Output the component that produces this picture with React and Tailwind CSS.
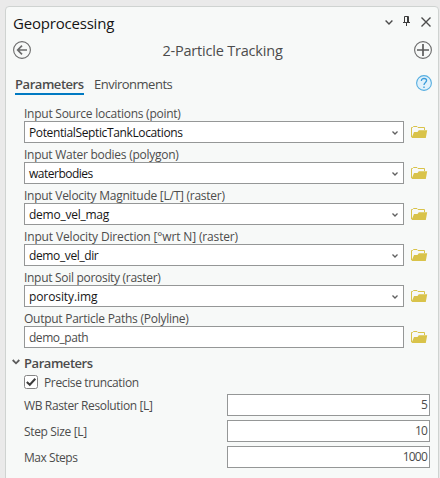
const fields = [
  { label: 'Input Source locations (point)', value: 'PotentialSepticTankLocations', lt: 'tracking-[-0.25px]', vt: 'tracking-[-0.37px]' },
  { label: 'Input Water bodies (polygon)', value: 'waterbodies', lt: 'tracking-[-0.26px]', vt: 'tracking-[-0.5px]' },
  { label: 'Input Velocity Magnitude [L/T] (raster)', value: 'demo_vel_mag', lt: 'tracking-[-0.26px]', vt: 'tracking-[-0.25px]' },
  { label: 'Input Velocity Direction [°wrt N] (raster)', value: 'demo_vel_dir', lt: 'tracking-[-0.15px]', vt: 'tracking-[-0.38px]' },
  { label: 'Input Soil porosity (raster)', value: 'porosity.img', lt: 'tracking-[-0.3px]', vt: 'tracking-[-0.1px]' },
  { label: 'Output Particle Paths (Polyline)', value: 'demo_path', lt: 'tracking-[-0.26px]', vt: 'tracking-[-0.47px]', output: true },
];

const numbers = [
  { label: 'WB Raster Resolution [L]', value: '5', lt: 'tracking-[-0.37px]' },
  { label: 'Step Size [L]', value: '10', lt: 'tracking-[-0.35px]' },
  { label: 'Max Steps', value: '1000', lt: 'tracking-[-0.45px]' },
];

function Folder() {
  return (
    <svg className="ml-[7px] h-[14px] w-[17px] shrink-0" viewBox="0 0 17 14" fill="none">
      <path d="M.5 12V2.5H1.5L2.5 1.5H6L7 2.5H13.5V5" stroke="#d9c34a" />
      <path d="M3 6.9H6.5L7.8 5.2H16.2L14.8 13H.5Z" fill="#d9c34a" />
    </svg>
  );
}

function Field({ field }) {
  return (
    <div className="h-[41px]">
      <div className={`h-[17px] whitespace-nowrap leading-[22px] ${field.lt}`}>{field.label}</div>
      <div className="mt-px flex items-center">
        <div className="flex h-[22px] w-[380px] items-center justify-between border border-[#959797] bg-white pr-[5px] pl-[4px]">
          <span className={`whitespace-nowrap pt-px leading-[21px] ${field.vt} ${field.output ? 'text-[#4c4c4c]' : 'text-[#151515]'}`}>{field.value}</span>
          {!field.output && (
            <svg className="mt-[2px] h-[4px] w-[6px]" viewBox="0 0 6 4" fill="none">
              <path d="M.5 .5L3 3L5.5 .5" stroke="#606060" strokeWidth="1.3" />
            </svg>
          )}
        </div>
        <Folder />
      </div>
    </div>
  );
}

export default function App() {
  return (
    <div className="h-[478px] w-[440px] overflow-hidden bg-[#eaeaea] pt-[6px] pl-[5px] font-['Open_Sans','Noto_Sans',sans-serif] text-[12px] text-[#4c4c4c]">
      <div className="h-[480px] w-[434px] rounded-t-[4px] border border-[#cfd3d1] bg-[#f7f9f8]">
        <header className="flex h-[32px] items-center justify-between pr-[7px] pl-[7px]">
          <h1 className="text-[15px] leading-[32px] tracking-[-0.2px] text-[#151515]">Geoprocessing</h1>
          <div className="flex items-center">
            <svg className="mt-[-1px] h-[5px] w-[8px]" viewBox="0 0 8 5" fill="none">
              <path d="M.6 .6L4 4L7.4 .6" stroke="#4c4c4c" strokeWidth="1.4" />
            </svg>
            <svg className="ml-[10px] mt-[-4px] h-[10px] w-[7px]" viewBox="0 0 7 10" fill="none">
              <path d="M1.5 6V.5H5.5V6M0 6.5H7M3.5 6V10" stroke="#3c3c3c" />
              <path d="M4.5 .5V6" stroke="#3c3c3c" />
            </svg>
            <svg className="ml-[11px] mt-[-2px] h-[10px] w-[10px]" viewBox="0 0 10 10" fill="none">
              <path d="M.5 .5L9.5 9.5M9.5 .5L.5 9.5" stroke="#4c4c4c" strokeWidth="1.4" />
            </svg>
          </div>
        </header>
        <div className="flex h-[24px] items-center justify-between pr-[6px] pl-[7px]">
          <svg className="mt-[-2px] h-[18px] w-[18px]" viewBox="0 0 18 18" fill="none">
            <circle cx="9" cy="9" r="8.4" stroke="#6b6b6b" strokeWidth="1.1" />
            <path d="M14 9H5M9 4.7L4.7 9L9 13.3" stroke="#6b6b6b" strokeWidth="1.7" />
          </svg>
          <h2 className="text-[14.5px] leading-[24px] tracking-[-0.2px]">2-Particle Tracking</h2>
          <svg className="mt-[-2px] h-[18px] w-[18px]" viewBox="0 0 18 18" fill="none">
            <circle cx="9" cy="9" r="8.4" stroke="#6b6b6b" strokeWidth="1.1" />
            <path d="M3 9H15M9 3V15" stroke="#5c5c5c" strokeWidth="1.7" />
          </svg>
        </div>
        <nav className="mt-[11px] flex h-[21px] pr-[6px] pl-[9px] text-[13px] leading-[20px]">
          <div className="h-[21px] w-[69px] border-b-2 border-[#007ac2] font-semibold tracking-[-0.45px]">Parameters</div>
          <div className="ml-[10px] tracking-[-0.5px]">Environments</div>
          <svg className="mt-px ml-auto h-[16px] w-[16px]" viewBox="0 0 16 16" fill="none">
            <circle cx="8" cy="8" r="7.4" fill="#e0f1fb" stroke="#56aee0" strokeWidth="1.1" />
            <path d="M5.4 6V5.6C5.4 2.8 10.6 2.8 10.6 5.6C10.6 7.4 8 7.6 8 10" stroke="#3b9ddb" strokeWidth="1.3" />
            <path d="M7.3 11.4H8.7V13H7.3Z" fill="#3b9ddb" />
          </svg>
        </nav>
        <main className="mt-[8px] pl-[18px]">
          {fields.map((f) => <Field key={f.label} field={f} />)}
          <div className="mt-[3px] ml-[-12px] flex h-[22px] items-center text-[13px] leading-[22px]">
            <svg className="mt-[-2px] h-[6px] w-[8px]" viewBox="0 0 8 6" fill="none">
              <path d="M.7 1L4 4.3L7.3 1" stroke="#5c5c5c" strokeWidth="1.8" />
            </svg>
            <h3 className="ml-[4px] font-semibold tracking-[-0.45px]">Parameters</h3>
          </div>
          <div className="mt-[-1px] flex h-[18px] items-center">
            <svg className="h-[14px] w-[14px]" viewBox="0 0 14 14" fill="none">
              <rect x=".5" y=".5" width="13" height="13" rx="2" fill="white" stroke="#858585" />
              <path d="M2.8 7L5.8 9.8L11.3 3.8" stroke="#3c3c3c" strokeWidth="2" />
            </svg>
            <span className="ml-[6px] pt-[2px] leading-[18px] tracking-[-0.37px]">Precise truncation</span>
          </div>
          <div className="mt-[3px] flex flex-col gap-[4px]">
            {numbers.map((n) => (
              <div key={n.label} className="flex h-[22px] w-[406px] items-center justify-between">
                <span className={`pt-[2px] leading-[22px] ${n.lt}`}>{n.label}</span>
                <div className="h-[22px] w-[203px] border border-[#959797] bg-white pr-[2px] text-right leading-[20px] tracking-[-0.8px]">{n.value}</div>
              </div>
            ))}
          </div>
        </main>
      </div>
    </div>
  );
}
